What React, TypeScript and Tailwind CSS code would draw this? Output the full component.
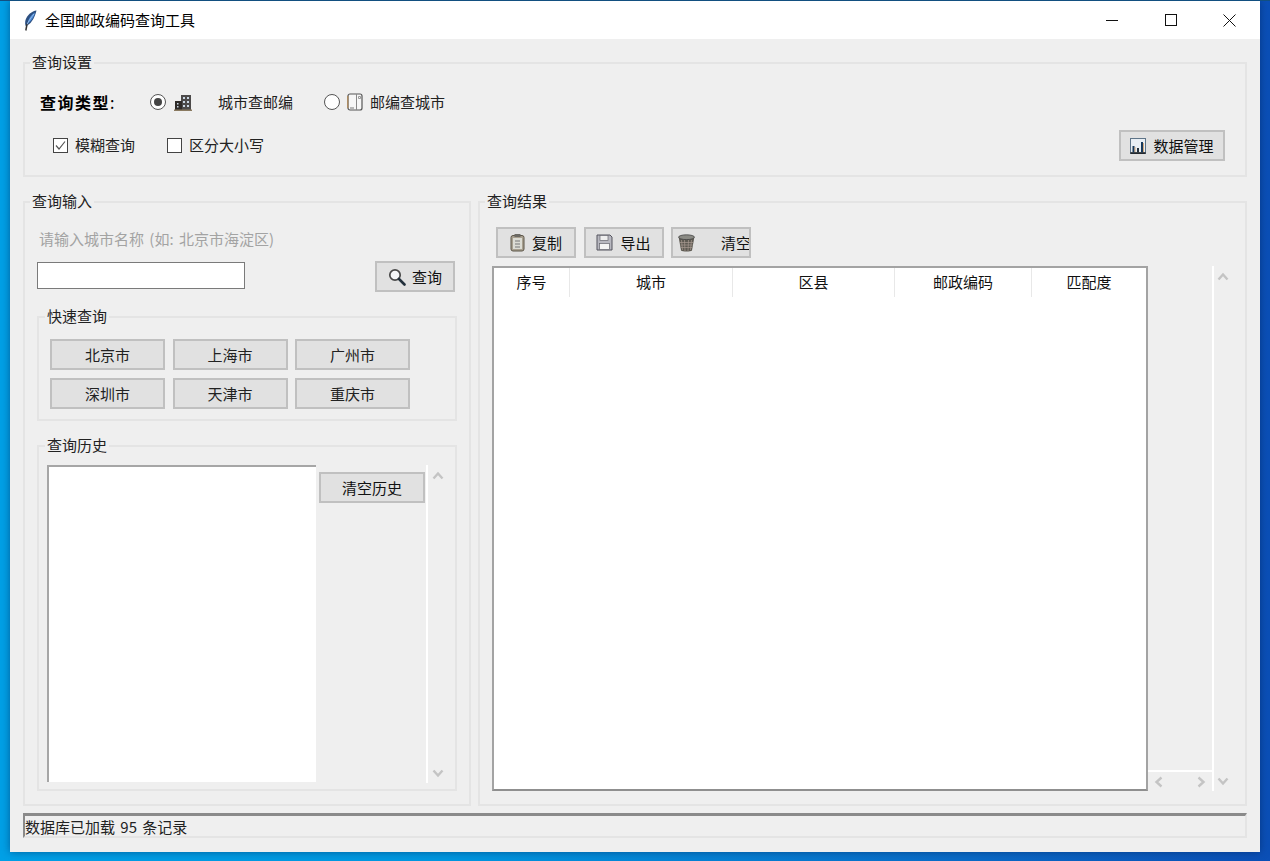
const FONT = "font-['Noto_Sans_CJK_SC','Liberation_Sans',sans-serif]";

function Group({ label, className = "", labelClass = "ml-[5px]", children }: { label: string; className?: string; labelClass?: string; children?: React.ReactNode }) {
  return (
    <div className={`border-2 border-[#e4e4e4] ${className}`}>
      <div className={`-mt-[12px] w-fit bg-[#efefef] px-[2px] text-[15px] leading-[20px] text-[#222] ${labelClass}`}>{label}</div>
      {children}
    </div>
  );
}

function Btn({ className = "", children }: { className?: string; children?: React.ReactNode }) {
  return (
    <div className={`flex h-[31px] items-center justify-center overflow-hidden border-2 border-[#c0c0c0] bg-[#e1e1e1] text-[15px] leading-[20px] text-[#111] ${className}`}>
      {children}
    </div>
  );
}

const Chev = ({ d }: { d: string }) => (
  <svg width="12" height="12" viewBox="0 0 12 12" fill="none" stroke="#c4c4c4" strokeWidth="2.4">
    <path d={d} />
  </svg>
);
const UP = "M1.5 8.5 6 3.5l4.5 5";
const DOWN = "M1.5 3.5 6 8.5l4.5-5";
const LEFT = "M8.5 1.5 3.5 6l5 4.5";
const RIGHT = "M3.5 1.5 8.5 6l-5 4.5";

const Feather = () => (
  <svg width="13" height="21" viewBox="0 0 13 21">
    <path d="M12.500 0.500C8 1 3 5 1.500 10c-.6 2.500-.4 4.500 .2 6C6 15 10.500 9 12.500 .5Z" fill="#2c4f80" />
    <path d="M11 2.500C8 4 4.500 8 3.500 13.500C6.500 12 10 7.500 11 2.500Z" fill="#4a8ad8" />
    <path d="M10 4C7.500 7 4.500 11 2.800 15" stroke="#a9c6e8" strokeWidth=".8" fill="none" />
    <path d="M3 14 1.800 20.500" stroke="#333" strokeWidth="1.500" fill="none" />
  </svg>
);
const Building = () => (
  <svg width="18" height="17" viewBox="0 0 18 17">
    <rect x="7" y="1" width="10" height="15" fill="#4c4a4a" />
    <rect x="1" y="7" width="7" height="9" fill="#2e2a28" />
    <path d="M9 3h2v2H9zM13 3h2v2h-2zM9 7h2v2H9zM13 7h2v2h-2zM9 11h2v2H9zM13 11h2v2h-2zM3 9h1.500v1.500H3zM3 12h1.500v1.500H3z" fill="#c9d6e2" />
    <rect x="0" y="15.500" width="18" height="1.500" fill="#8a7a60" />
  </svg>
);
const Phone = () => (
  <svg width="16" height="18" viewBox="0 0 16 18" fill="none">
    <rect x="1" y="1" width="14" height="16" rx="2" fill="#f6f6f6" stroke="#555" strokeWidth="1.200" />
    <path d="M9.500 1v16" stroke="#888" />
    <path d="M11.500 3.500h2v2h-2z" stroke="#999" />
    <path d="M.8 3v12" stroke="#c08840" strokeWidth=".8" />
    <path d="M3 15h4" stroke="#777" />
  </svg>
);
const Magnifier = () => (
  <svg width="18" height="18" viewBox="0 0 18 18" fill="none">
    <circle cx="7" cy="7" r="5.200" stroke="#4a4a4a" strokeWidth="1.700" fill="#f4f6f8" />
    <path d="M11 11l5.500 5.500" stroke="#22303c" strokeWidth="2.600" strokeLinecap="round" />
  </svg>
);
const Clipboard = () => (
  <svg width="15" height="19" viewBox="0 0 15 19">
    <rect x="1" y="2.500" width="13" height="15.500" rx="2" fill="#a8a090" stroke="#5d5648" />
    <rect x="3" y="5" width="9" height="11" fill="#dcdcd4" />
    <rect x="4.500" y="1" width="6" height="3" fill="#6c6a64" />
    <path d="M5 8h5M5 11h5M5 14h5" stroke="#777" />
  </svg>
);
const Floppy = () => (
  <svg width="17" height="17" viewBox="0 0 17 17">
    <path d="M1 1h13l2 2v13H1z" fill="#b8b8c0" stroke="#55555f" />
    <rect x="4" y="1.500" width="8" height="5" fill="#eee" stroke="#66666e" strokeWidth=".7" />
    <rect x="3.500" y="9.500" width="10" height="6" fill="#f4f4f4" stroke="#66666e" strokeWidth=".7" />
  </svg>
);
const Trash = () => (
  <svg className="shrink-0" width="17" height="18" viewBox="0 0 17 18">
    <path d="M.8 4 3 16.500c1.500 1.400 9.500 1.400 11 0L16.200 4Z" fill="#5e5a52" />
    <path d="M3.500 6l1 10M6.500 6l.5 11M10.500 6l-.5 11M13.500 6l-1 10M2 8.500h13M2.500 11h12M3 13.500h11" stroke="#a89a90" strokeWidth=".7" />
    <ellipse cx="8.500" cy="3.200" rx="8" ry="2.400" fill="#8a8a84" stroke="#444" strokeWidth=".8" />
  </svg>
);
const Chart = () => (
  <svg width="16" height="16" viewBox="0 0 16 16" fill="none">
    <rect x="0.500" y="0.500" width="15" height="15" fill="#e8eef4" stroke="#5e7488" />
    <path d="M0.500 15h15" stroke="#111" strokeWidth="1.500" />
    <path d="M3.500 14.500V8M12 14.500V4" stroke="#17395c" strokeWidth="2" />
    <path d="M8 14.500V10" stroke="#23303c" strokeWidth="2" />
    <path d="M5 14V9M13.500 14V5" stroke="#c88a48" strokeWidth=".7" />
  </svg>
);

const Radio = ({ on }: { on?: boolean }) => (
  <div className="flex h-[16px] w-[16px] items-center justify-center rounded-full border-[1.5px] border-[#555] bg-white">
    {on && <div className="h-[8px] w-[8px] rounded-full bg-[#444]" />}
  </div>
);
const Check = ({ on }: { on?: boolean }) => (
  <div className="flex h-[15px] w-[15px] items-center justify-center border border-[#444] bg-white">
    {on && (
      <svg width="13" height="13" viewBox="0 0 13 13" fill="none" stroke="#555" strokeWidth="1.200">
        <path d="M2 6.500 5 10l6-7.500" />
      </svg>
    )}
  </div>
);

const COLS = [
  ["序号", "w-[76px]"],
  ["城市", "w-[163px]"],
  ["区县", "w-[162px]"],
  ["邮政编码", "w-[137px]"],
  ["匹配度", "flex-1"],
];

export default function App() {
  return (
    <div className={`${FONT} h-[861px] w-full overflow-hidden border-t border-[#124f80] bg-[linear-gradient(90deg,#00a0e6_0%,#0098e0_35%,#0a6cc8_75%,#0b4fb6_100%)] pl-[10px]`}>
      <div className="flex h-[851px] w-[1250px] flex-col bg-[#efefef] shadow-[0_0_8px_rgba(0,30,80,0.5)]">
        <div className="flex h-[38px] items-center bg-white pl-[14px] text-[15px] text-black">
          <Feather />
          <span className="ml-[8px] flex-1">全国邮政编码查询工具</span>
          <div className="flex h-full">
            <div className="flex w-[59px] items-center justify-center">
              <svg width="12" height="12" viewBox="0 0 12 12" stroke="#111"><path d="M0 6.500h12" /></svg>
            </div>
            <div className="flex w-[59px] items-center justify-center">
              <svg width="12" height="12" viewBox="0 0 12 12" fill="none" stroke="#111"><rect x=".5" y=".5" width="11" height="11" /></svg>
            </div>
            <div className="flex w-[60px] items-center justify-center pr-[1px]">
              <svg width="13" height="13" viewBox="0 0 13 13" stroke="#111"><path d="M.5.500l12 12M12.500.500l-12 12" /></svg>
            </div>
          </div>
        </div>

        <div className="flex flex-1 flex-col px-[13px] pb-[14px] pt-[23px]">
          <Group label="查询设置" className="h-[115px]">
            <div className="ml-[15px] mt-[18px] flex h-[24px] items-center">
              <span className="w-[110px] text-[16px] font-bold tracking-[1.5px] text-black">查询类型<span className="font-normal">:</span></span>
              <Radio on />
              <div className="ml-[8px]"><Building /></div>
              <span className="ml-[26px] w-[106px] text-[15px] text-[#222]">城市查邮编</span>
              <Radio />
              <div className="ml-[7px]"><Phone /></div>
              <span className="ml-[7px] text-[15px] text-[#222]">邮编查城市</span>
            </div>
            <div className="ml-[28px] mt-[16px] flex items-start justify-between pr-[20px]">
              <div className="mt-[5px] flex items-center text-[15px] leading-[20px] text-[#222]">
                <Check on />
                <span className="ml-[7px] w-[92px]">模糊查询</span>
                <Check />
                <span className="ml-[7px]">区分大小写</span>
              </div>
              <Btn className="w-[106px] gap-[7px]"><Chart /><span>数据管理</span></Btn>
            </div>
          </Group>

          <div className="mt-[24px] flex min-h-0 flex-1 gap-[7px]">
            <Group label="查询输入" className="flex w-[448px] flex-col">
              <div className="ml-[14px] mt-[18px] h-[20px] text-[15px] leading-[20px] text-[#a3a3a3] [word-spacing:2px]">请输入城市名称 (如: 北京市海淀区)</div>
              <div className="ml-[12px] mt-[12px] flex items-start pr-[14px]">
                <div className="mt-[1px] h-[27px] w-[208px] border border-[#7a7a7a] bg-white" />
                <Btn className="ml-auto w-[80px] gap-[6px]"><Magnifier /><span>查询</span></Btn>
              </div>
              <Group label="快速查询" labelClass="ml-[6px]" className="mx-[12px] mt-[24px] h-[105px]">
                <div className="ml-[11px] mt-[13px] grid w-[360px] grid-cols-3 gap-x-[7.500px] gap-y-[8px]">
                  {["北京市", "上海市", "广州市", "深圳市", "天津市", "重庆市"].map((t) => (
                    <Btn key={t} className="text-[#222]">{t}</Btn>
                  ))}
                </div>
              </Group>
              <Group label="查询历史" labelClass="ml-[6px]" className="mx-[12px] mb-[13px] mt-[24px] flex min-h-0 flex-1 flex-col">
                <div className="flex min-h-0 flex-1 pl-[8px]">
                  <div className="mt-[10px] h-[317px] w-[269px] border-l-2 border-t-2 border-[#a6a6a6] bg-white" />
                  <Btn className="ml-[3px] mt-[17px] w-[106px]">清空历史</Btn>
                  <div className="ml-[1px] mt-[10px] flex h-[318px] w-[20px] flex-col items-center justify-between border-l-2 border-white pb-[4px] pl-[1px] pt-[5px]">
                    <Chev d={UP} />
                    <Chev d={DOWN} />
                  </div>
                </div>
              </Group>
            </Group>

            <Group label="查询结果" className="flex flex-1 flex-col">
              <div className="ml-[16px] mt-[16px] flex gap-[7.500px]">
                <Btn className="w-[80px] gap-[7px]"><Clipboard /><span>复制</span></Btn>
                <Btn className="w-[80px] gap-[7px]"><Floppy /><span>导出</span></Btn>
                <Btn className="w-[80px] justify-start pl-[5px]"><Trash /><span className="ml-[26px] shrink-0">清空</span></Btn>
              </div>
              <div className="ml-[12px] mt-[8px] flex min-h-0 flex-1 pb-[13px]">
                <div className="w-[656px] border-2 border-[#a3a3a3] border-b-[#8f8f8f] bg-white">
                  <div className="flex h-[29px]">
                    {COLS.map(([t, w]) => (
                      <div key={t} className={`flex items-center justify-center border-r border-[#e8e8e8] text-[15px] text-[#111] last:border-r-0 ${w}`}>{t}</div>
                    ))}
                  </div>
                </div>
                <div className="flex w-[64px] flex-col justify-end">
                  <div className="flex h-[21px] items-center justify-between border-t-2 border-white px-[5px]">
                    <Chev d={LEFT} />
                    <Chev d={RIGHT} />
                  </div>
                </div>
                <div className="flex w-[19px] flex-col items-center justify-between border-l-2 border-white pb-[4px] pt-[5px]">
                  <Chev d={UP} />
                  <Chev d={DOWN} />
                </div>
              </div>
            </Group>
          </div>

          <div className="mt-[7px] h-[25px] border-b-2 border-l-2 border-r-2 border-t-[3px] border-[#e4e4e4] border-l-[#8a8a8a] border-t-[#8a8a8a] text-[15px] leading-[21px] text-[#222] [word-spacing:2px]">数据库已加载 95 条记录</div>
        </div>
      </div>
    </div>
  );
}
